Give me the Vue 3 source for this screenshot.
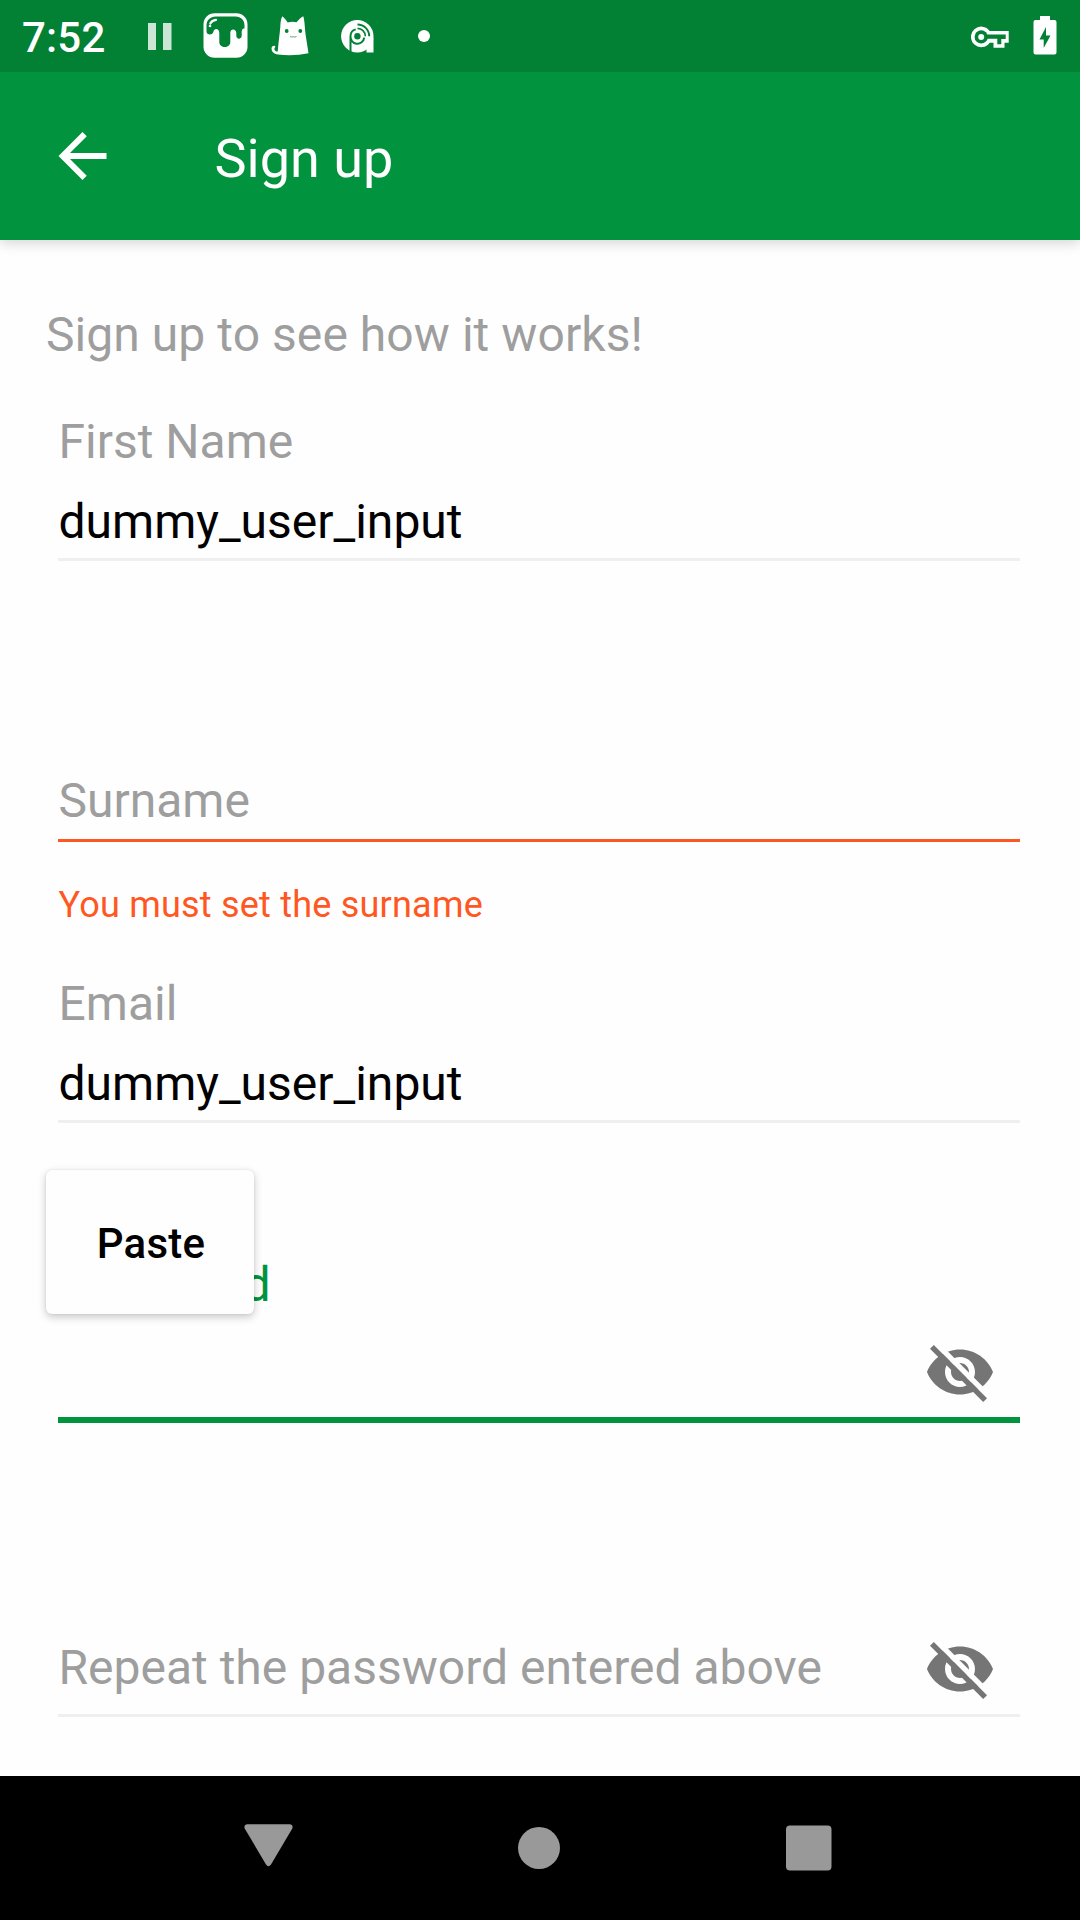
<script setup>
const eye = 'M12 4.5C7 4.5 2.73 7.61 1 12c1.73 4.39 6 7.5 11 7.5s9.27-3.11 11-7.5C21.27 7.61 17 4.5 12 4.5zM12 17c-2.76 0-5-2.24-5-5s2.24-5 5-5 5 2.24 5 5-2.24 5-5 5zm0-8c-1.66 0-3 1.34-3 3s1.34 3 3 3 3-1.34 3-3-1.34-3-3-3z'
</script>

<template>
  <div class="screen">
    <header class="status">
      <span class="clock">7:52</span>
      <svg class="pause" viewBox="0 0 24 27" width="24" height="27"><path d="M0 0h8v27H0zM15 0h8.500v27H15z" fill="#fff" fill-opacity=".8" /></svg>
      <svg class="bucket" viewBox="0 0 45 45" width="45" height="45">
        <rect x=".5" y=".3" width="44" height="44.500" rx="11" fill="#fff" />
        <path d="M3.500 18.500V12.500C3.500 7 7.500 3.500 12.500 3.500H32.500C38 3.500 41.500 7 41.500 12.500V15.500C39 15.500 38.700 17.500 38.700 20V22.500C38.700 26.700 33.300 26.700 33.300 22.500V20C33.300 15.500 27.300 15 27.300 20V29C27.300 35.700 16.300 35.700 16.300 29V20C16.300 14.800 11 15 10.500 18.500C10 22.500 3.500 22.500 3.500 18.500Z" fill="#028034" />
        <path d="M7.300 10.500Q9 7.200 13 6.800" fill="none" stroke="#fff" stroke-width="2.200" stroke-linecap="round" />
        <circle cx="7" cy="13" r="1.300" fill="#fff" />
      </svg>
      <svg class="cat" viewBox="0 0 38 40" width="38" height="40">
        <path d="M11.300 0.300C13 1.500 15.300 4.500 16.700 6.600Q21 5.300 25.500 6.300C27.500 4 30 1 32.300.2C33.600 4 33.600 10 34.500 18L37.500 37.300Q22 40.500 7 38.500C2.500 38 .2 35 .6 32C1 29.200 4.500 29.300 4.400 31C3 32 3 34 4.500 35Q5.500 35.700 6.700 35.500C7.500 26 8.700 18 9.300 11C9.500 6 10 3 11.300.3Z" fill="#fff" />
        <circle cx="15.700" cy="15" r="1.900" fill="#028034" /><circle cx="29.300" cy="15" r="1.900" fill="#028034" />
        <path d="M19 20.500q1.800 1 3.300.2 1.500.8 3.300-.2" fill="none" stroke="#028034" stroke-opacity=".65" stroke-width="1" />
      </svg>
      <svg class="radar" viewBox="0 0 33 33" width="33" height="33">
        <circle cx="16.300" cy="16.200" r="16.200" fill="#fff" />
        <path d="M25.500 18H32.500V32.500H25.500Z" fill="#fff" />
        <g fill="none" stroke="#028034">
          <path d="M9.500 33V16A6.900 6.900 0 0 1 14.700 9.400M9.500 16A6.900 6.900 0 1 0 23.200 17.700" stroke-width="2" />
          <path d="M16.500 8.300A7.900 7.900 0 0 1 24.300 16.200" stroke-width="1.700" />
          <path d="M16.500 4.500A11.700 11.700 0 0 1 28.200 16.200" stroke-width="1.900" />
        </g>
        <circle cx="16.400" cy="16.200" r="3.200" fill="#028034" />
      </svg>
      <span class="dot"></span>
      <svg class="key" viewBox="0 0 38 22" width="38" height="22">
        <path d="M18.700 5H37.700V16.700H33.500V21.700H22.500V16.700H18.700A10.300 10.300 0 1 1 18.700 5Z" fill="#fff" />
        <path d="M15 8.400H34.700V13H30.300V18.300H26.300V12.700H15Z" fill="#028034" />
        <circle cx="10.200" cy="10.900" r="6.600" fill="#028034" />
        <circle cx="10.200" cy="10.900" r="3" fill="#fff" />
      </svg>
      <svg class="battery" viewBox="0 0 24 39" width="24" height="39">
        <path d="M7 0h10v4h4.500Q23.500 4 23.500 6v30.500q0 2-2 2h-19q-2 0-2-2V6q0-2 2-2H7Z" fill="#fff" />
        <path d="M13 11 6.500 23.500h4.200V32L17.500 19.500H13Z" fill="#028034" />
      </svg>
    </header>

    <nav class="appbar">
      <svg viewBox="-.17 0 24 24" width="72" height="72"><path d="M20 11H7.830l5.590-5.590L12 4l-8 8 8 8 1.410-1.410L7.830 13H20z" fill="#fff" /></svg>
      <h1>Sign up</h1>
    </nav>

    <main>
      <p class="intro">Sign up to see how it works!</p>
      <section class="field first">
        <label>First Name</label>
        <div class="value">dummy_user_input</div>
      </section>
      <section class="field surname">
        <label>Surname</label>
      </section>
      <p class="error">You must set the surname</p>
      <section class="field email">
        <label>Email</label>
        <div class="value">dummy_user_input</div>
      </section>
      <section class="field password">
        <label>Password</label>
        <div class="toggle">
          <svg viewBox="0 0 24 24" width="72" height="72"><path :d="eye" fill="#757575" /><path d="M3.270 3 21 20.730 22.270 19.460 4.540 1.730z" fill="#fefefe" /><path d="M2 4.270 19.730 22 21 20.730 3.270 3z" fill="#757575" /></svg>
        </div>
        <div class="popup">Paste</div>
      </section>
      <section class="field repeat">
        <label>Repeat the password entered above</label>
        <svg viewBox="0 0 24 24" width="72" height="72"><path :d="eye" fill="#757575" /><path d="M3.270 3 21 20.730 22.270 19.460 4.540 1.730z" fill="#fefefe" /><path d="M2 4.270 19.730 22 21 20.730 3.270 3z" fill="#757575" /></svg>
      </section>
    </main>

    <footer>
      <svg viewBox="0 0 49 43" width="49" height="43"><path d="M3 .2H46Q49.500.7 48.300 4.500L27 40.500Q24.500 44 22 40.500L.7 4.500Q-.5.700 3 .2Z" fill="#999" /></svg>
      <svg viewBox="0 0 42 42" width="42" height="42"><circle cx="21" cy="21" r="21" fill="#999" /></svg>
      <svg viewBox="0 0 46 46" width="46" height="46"><rect x="0" y=".5" width="45.500" height="45" rx="4" fill="#999" /></svg>
    </footer>
  </div>
</template>

<style>
body { margin: 0; background: #fefefe; }
</style>

<style scoped>
.screen { width: 1080px; height: 1920px; display: flex; flex-direction: column; overflow: hidden; background: #fefefe; font-family: Roboto, "Liberation Sans", sans-serif; }
.screen * { box-sizing: border-box; }
svg { display: block; flex: none; }
h1, p { margin: 0; font-weight: 400; }

.status { position: relative; z-index: 1; height: 72px; flex: none; display: flex; align-items: flex-start; background: #028034; color: #fff; }
.clock { width: 126px; margin-left: 22px; padding-top: 13px; font-size: 42px; line-height: 49px; font-weight: 500; letter-spacing: .2px; white-space: nowrap; flex: none; }
.pause { margin-top: 23px; }
.bucket { margin: 13px 0 0 31px; }
.cat { margin: 16px 0 0 22.500px; }
.radar { margin: 20px 0 0 32.500px; }
.dot { width: 12px; height: 12px; margin: 30px 0 0 43.500px; border-radius: 50%; background: #fff; }
.key { margin: 26px 0 0 auto; }
.battery { margin: 16px 23px 0 24px; }

.appbar { height: 168px; flex: none; display: flex; align-items: center; padding-left: 46px; background: #02933f; color: #fff; box-shadow: 0 3px 12px rgba(0, 0, 0, .17); }
.appbar h1 { margin: 5px 0 0 96.500px; font-size: 54px; line-height: 64px; white-space: nowrap; }

main { height: 1536px; flex: none; display: flex; flex-direction: column; padding: 67px 60px 0 58px; }
.intro { margin-left: -12px; color: #9e9e9e; font-size: 48px; line-height: 56px; letter-spacing: .06px; white-space: nowrap; }
.field { position: relative; display: flex; flex-direction: column; border-bottom: 3px solid #efefef; font-size: 48px; line-height: 56px; color: #9e9e9e; white-space: nowrap; }
.field label, .value { margin-left: .5px; }
.first { height: 147px; margin-top: 51px; }
.value { margin-top: 24px; color: #000; }
.surname { height: 69px; margin-top: 212px; border-color: #ff5722; }
.error { margin: 42px 0 0 .5px; color: #ff5722; font-size: 36px; line-height: 42px; letter-spacing: .22px; white-space: nowrap; }
.email { height: 147px; margin-top: 50px; }
.password { height: 166px; margin-top: 134px; border-bottom: 6px solid #02933f; color: #02933f; }
.toggle { align-self: flex-end; margin: 23px 24px 0 0; }
.popup { position: absolute; left: -12px; top: -87px; width: 208px; height: 144px; padding: 4px 0 0 2px; display: flex; align-items: center; justify-content: center; border-radius: 6px; background: #fefefe; color: #000; font-size: 42px; font-weight: 500; letter-spacing: .2px; box-shadow: 0 3px 8px rgba(0, 0, 0, .22), 0 0 2px rgba(0, 0, 0, .1); }
.repeat { height: 84px; margin-top: 210px; flex-direction: row; justify-content: space-between; align-items: flex-start; padding: 0 24px 0 0; }
.repeat label { margin-top: 7px; }

footer { flex: 1; display: flex; align-items: flex-start; background: #000; padding: 48px 0 0 244px; }
footer svg:nth-child(2) { margin: 3px 0 0 225px; }
footer svg:nth-child(3) { margin: 1px 0 0 226px; }
</style>
